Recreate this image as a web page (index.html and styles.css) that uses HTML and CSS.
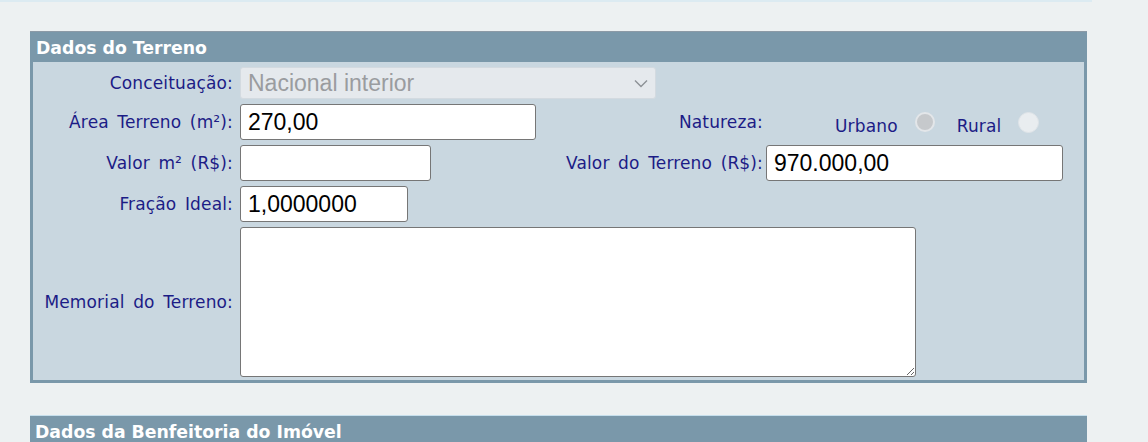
FILE: index.html
```html
<!DOCTYPE html>
<html lang="pt-BR">
<head>
<meta charset="utf-8">
<title>Dados do Terreno</title>
<link rel="stylesheet" href="styles.css">
</head>
<body>
<div class="top-strip"></div>
<section class="panel">
  <h2 class="panel-title">Dados do Terreno</h2>
  <div class="form">
    <label class="lbl">Conceituação:</label>
    <div class="select-wrap span3">
      <select class="sel" disabled><option>Nacional interior</option></select>
      <svg class="chev" width="14" height="9" viewBox="0 0 14 9"><path d="M1 1.5 L7 7.5 L13 1.5" fill="none" stroke="#8d9196" stroke-width="1.4"/></svg>
    </div>

    <label class="lbl">Área Terreno (m²):</label>
    <div><input class="inp w296" type="text" value="270,00"></div>
    <label class="lbl lbl2">Natureza:</label>
    <div class="radios">
      <span class="rtxt">Urbano</span><span class="radio radio-on"></span>
      <span class="rtxt rural">Rural</span><span class="radio radio-off"></span>
    </div>

    <label class="lbl">Valor m² (R$):</label>
    <div><input class="inp w191" type="text" value=""></div>
    <label class="lbl lbl2">Valor do Terreno (R$):</label>
    <div><input class="inp w297" type="text" value="970.000,00"></div>

    <label class="lbl">Fração Ideal:</label>
    <div class="span3"><input class="inp w168" type="text" value="1,0000000"></div>

    <label class="lbl">Memorial do Terreno:</label>
    <div class="span3"><textarea class="memo"></textarea></div>
  </div>
</section>
<section class="panel panel2">
  <h2 class="panel-title title2">Dados da Benfeitoria do Imóvel</h2>
</section>
</body>
</html>
```
FILE: styles.css
```css
html, body {
  margin: 0;
  padding: 0;
  background: #edf1f2;
  overflow: hidden;
}
body {
  width: 1148px;
  height: 442px;
  font-family: "DejaVu Sans", Verdana, sans-serif;
}
.top-strip {
  height: 2px;
  width: 1092px;
  background: #dcebf2;
}
.panel {
  margin: 30px 0 0 30px;
  width: 1051px;
  border: 3px solid #7a98aa;
  border-top: 0;
  background: #c9d7e0;
}
.panel-title {
  margin: 0 -3px;
  height: 28px;
  padding: 2px 0 0 6px;
  line-height: 28px;
  font-size: 17.3px;
  font-weight: bold;
  color: #ffffff;
  background: #7a98aa;
  border-top: 1px solid #8c9aa6;
  margin-top: -1px;
}
.panel2 {
  margin-top: 32px;
  border: 0;
  width: 1057px;
}
.title2 {
  margin: 0;
  padding-left: 5px;
  border-top: 1px solid #c6dfec;
}
.form {
  display: grid;
  grid-template-columns: 207px 296px 230px 1fr;
  row-gap: 5px;
  padding: 5px 0 3px 0;
  align-items: center;
}
.lbl {
  font-size: 17px;
  color: #1c1c86;
  text-align: right;
  padding-right: 7px;
  white-space: nowrap;
  letter-spacing: 0.15px;
  word-spacing: 3px;
}
.lbl2 {
  padding-right: 3px;
}
.span3 {
  grid-column: 2 / span 3;
}
.select-wrap {
  position: relative;
  width: 416px;
  height: 32px;
}
.sel {
  -webkit-appearance: none;
  appearance: none;
  box-sizing: border-box;
  width: 416px;
  height: 32px;
  margin: 0;
  padding: 0 0 0 7px;
  border: 1px solid #d3dae0;
  border-radius: 3px;
  background: #e5e9ed;
  color: #9a9c9f;
  font-family: "Liberation Sans", Arial, sans-serif;
  font-size: 23px;
  opacity: 1;
}
.chev {
  position: absolute;
  right: 8px;
  top: 12px;
}
.inp {
  box-sizing: border-box;
  display: block;
  height: 36px;
  margin: 0;
  padding: 0 0 0 7px;
  border: 1px solid #767676;
  border-radius: 3px;
  background: #ffffff;
  color: #000000;
  font-family: "Liberation Sans", Arial, sans-serif;
  font-size: 23px;
  outline: none;
}
.w296 { width: 296px; }
.w191 { width: 191px; }
.w297 { width: 297px; }
.w168 { width: 168px; }
.memo {
  box-sizing: border-box;
  display: block;
  width: 676px;
  height: 150px;
  margin: 0;
  border: 1px solid #767676;
  border-radius: 3px;
  background: #ffffff;
  font-family: "Liberation Sans", Arial, sans-serif;
  font-size: 16px;
}
.radios {
  display: flex;
  align-items: center;
  padding-left: 69px;
}
.rtxt {
  font-size: 17px;
  color: #1c1c86;
  padding-top: 7px;
  letter-spacing: 0.15px;
}
.rural {
  margin-left: 22px;
}
.radio {
  box-sizing: border-box;
  display: inline-block;
  width: 20px;
  height: 20px;
  border-radius: 50%;
  margin-left: 17px;
}
.radio-on {
  background: #c6c9cc;
  border: 2px solid #e3e6e9;
}
.radio-off {
  width: 21px;
  height: 21px;
  background: #e9edf0;
  border: 1px solid #dfe4e8;
}
```
